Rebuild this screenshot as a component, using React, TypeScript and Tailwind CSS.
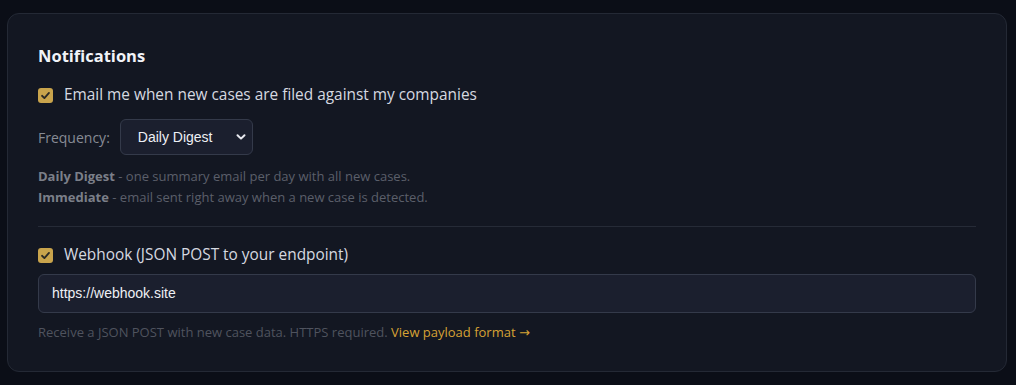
import React from "react";

function Check() {
  return (
    <span className="flex h-[15px] w-[15px] shrink-0 items-center justify-center rounded-[3px] bg-[#c9a44c]">
      <svg width="11" height="11" viewBox="0 0 12 12" fill="none">
        <path d="M2.2 6.3 L4.8 8.8 L9.8 3.2" stroke="#2b2a26" strokeWidth="2" strokeLinecap="round" strokeLinejoin="round" />
      </svg>
    </span>
  );
}

export default function App() {
  return (
    <div className="min-h-[385px] w-full bg-[#0b0e17] pl-[7px] pr-[9px] pt-[13px] pb-[13px] font-['Open_Sans','Noto_Sans',sans-serif]">
      <div className="rounded-[12px] border border-[#242935] bg-[#131722] px-[30px] pt-[31px] pb-[28px]">
        <h2 className="text-[16.5px] font-bold leading-[22px] text-[#f1f3f8]">Notifications</h2>

        <label className="mt-[18px] flex items-center gap-[11px]">
          <Check />
          <span className="text-[15.4px] leading-[20px] text-[#d6d9e0]">Email me when new cases are filed against my companies</span>
        </label>

        <div className="mt-[14px] flex items-center gap-[10px]">
          <span className="text-[14px] text-[#878b95]">Frequency:</span>
          <div className="flex h-[36px] w-[133px] items-center justify-between rounded-[6px] border border-[#343a4a] bg-[#1b1f2e] pl-[17px] pr-[5px]">
            <span className="font-['Liberation_Sans',Arial,sans-serif] text-[14px] text-[#eef0f5]">Daily Digest</span>
            <svg width="12" height="12" viewBox="0 0 12 12" fill="none">
              <path d="M2.5 4.2 L6 7.6 L9.5 4.2" stroke="#e8eaf0" strokeWidth="2" strokeLinecap="round" strokeLinejoin="round" />
            </svg>
          </div>
        </div>

        <div className="mt-[11px] text-[13px] leading-[21px] text-[#5b5f6a]">
          <div>
            <span className="font-bold text-[#7b7f89]">Daily Digest</span> - one summary email per day with all new cases.
          </div>
          <div>
            <span className="font-bold text-[#7b7f89]">Immediate</span> - email sent right away when a new case is detected.
          </div>
        </div>

        <div className="mt-[18px] h-px bg-[#262b37]" />

        <label className="mt-[18px] flex items-center gap-[11px]">
          <Check />
          <span className="text-[15.4px] leading-[20px] text-[#d6d9e0]">Webhook (JSON POST to your endpoint)</span>
        </label>

        <div className="mt-[9px] flex h-[39px] items-center rounded-[6px] border border-[#343a4a] bg-[#1b1f2e] px-[13px]">
          <span className="font-['Liberation_Sans',Arial,sans-serif] text-[14px] text-[#eef0f5]">https://webhook.site</span>
        </div>

        <div className="mt-[9px] text-[13px] leading-[20px] text-[#4f535e]">
          Receive a JSON POST with new case data. HTTPS required.{" "}
          <span className="text-[#d6a234]">
            View payload format <span className="font-['DejaVu_Sans',sans-serif]">→</span>
          </span>
        </div>
      </div>
    </div>
  );
}
